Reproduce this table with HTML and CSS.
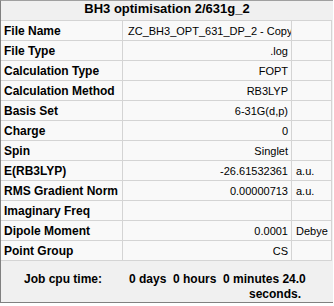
FILE: index.html
```html
<!DOCTYPE html>
<html lang="en">
<head>
  <meta charset="UTF-8" />
  <title>BH3 optimisation 2/631g_2</title>
  <link rel="stylesheet" href="styles.css">
</head>
<body>
  <div class="panel">
    <div class="title">BH3 optimisation 2/631g_2</div>
    <table class="summary">
      <tr><th>File Name</th><td class="val">ZC_BH3_OPT_631_DP_2 - Copy</td><td class="unit"></td></tr>
      <tr><th>File Type</th><td class="val">.log</td><td class="unit"></td></tr>
      <tr><th>Calculation Type</th><td class="val">FOPT</td><td class="unit"></td></tr>
      <tr><th>Calculation Method</th><td class="val">RB3LYP</td><td class="unit"></td></tr>
      <tr><th>Basis Set</th><td class="val">6-31G(d,p)</td><td class="unit"></td></tr>
      <tr><th>Charge</th><td class="val">0</td><td class="unit"></td></tr>
      <tr><th>Spin</th><td class="val">Singlet</td><td class="unit"></td></tr>
      <tr><th>E(RB3LYP)</th><td class="val">-26.61532361</td><td class="unit">a.u.</td></tr>
      <tr><th>RMS Gradient Norm</th><td class="val">0.00000713</td><td class="unit">a.u.</td></tr>
      <tr><th>Imaginary Freq</th><td class="val"></td><td class="unit"></td></tr>
      <tr><th>Dipole Moment</th><td class="val">0.0001</td><td class="unit">Debye</td></tr>
      <tr><th>Point Group</th><td class="val">CS</td><td class="unit"></td></tr>
    </table>
    <div class="cpu">
      <div class="cpu-label">Job cpu time:</div>
      <div class="cpu-value">0 days&nbsp; 0 hours&nbsp; 0 minutes 24.0<br><span class="cpu-tail">seconds.</span></div>
    </div>
  </div>
</body>
</html>
```

FILE: styles.css
```css
body {
  margin: 0;
  background: #fff;
  font-family: "Liberation Sans", Arial, sans-serif;
  font-size: 12px;
  color: #000;
}
.panel {
  width: 332px;
  height: 301px;
  background: #f0f0f0;
  border-top: 1px solid #a0a0a0;
  border-left: 1px solid #808080;
  border-bottom: 1px solid #808080;
}
.title {
  height: 19px;
  line-height: 15px;
  text-align: center;
  font-size: 13px;
  font-weight: bold;
}
.summary {
  border-collapse: collapse;
  table-layout: fixed;
  width: 331px;
  border-right: 1px solid #a0a0a0;
}
.summary th,
.summary td {
  height: 19px;
  padding: 0 5px;
  border: 1px solid #d4d4d4;
  background: #f9f9f9;
  white-space: nowrap;
  overflow: hidden;
}
.summary th {
  width: 113px;
  text-align: left;
  font-weight: bold;
  border-left: none;
  padding-left: 3px;
  padding-right: 5px;
}
.summary .val {
  width: 160px;
  padding-right: 3px;
  text-align: right;
  font-size: 11px;
}
.summary .unit {
  text-align: left;
  padding-left: 4px;
  font-size: 11px;
}
.cpu {
  display: flex;
  padding-top: 11px;
  font-weight: bold;
  line-height: 15px;
}
.cpu-label {
  width: 101px;
  text-align: right;
}
.cpu-value {
  padding-left: 27px;
}
.cpu-tail {
  padding-left: 120px;
}
```
